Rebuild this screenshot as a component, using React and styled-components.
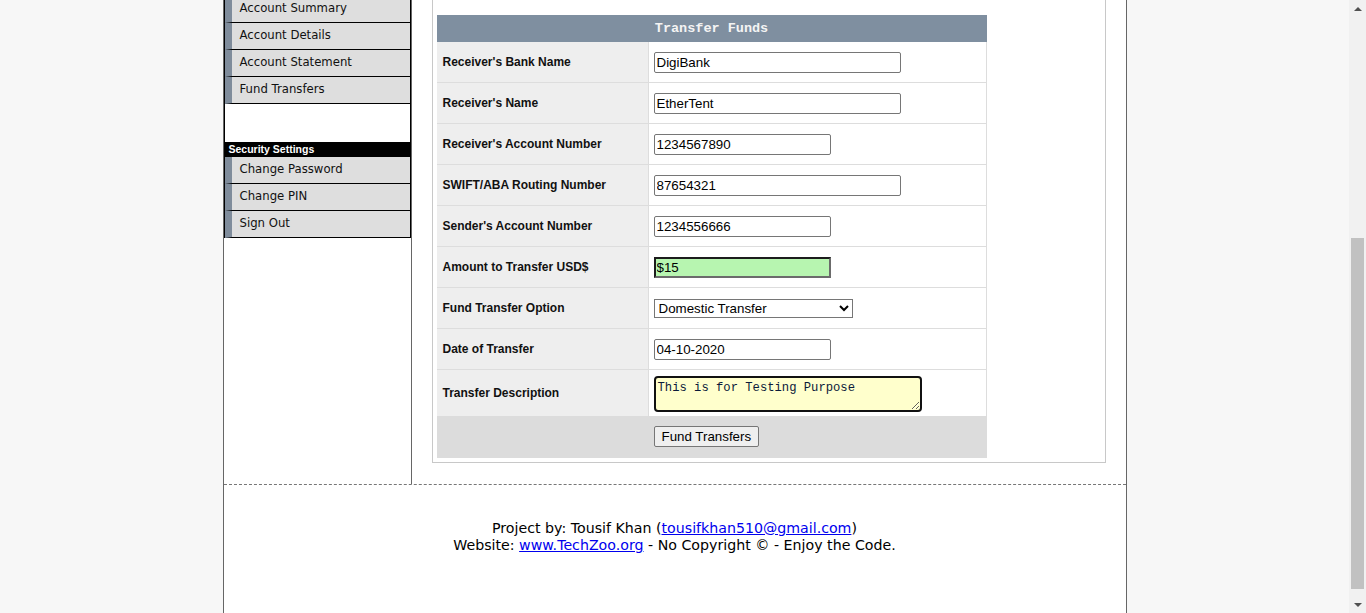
import styled, { createGlobalStyle } from 'styled-components';

const GlobalStyle = createGlobalStyle`
  html, body {
    margin: 0;
    padding: 0;
    height: 100%;
    overflow: hidden;
    background: #f7f7f7;
  }
`;

const Screen = styled.div`
  display: flex;
  height: 613px;
  width: 1366px;
`;

const Viewport = styled.div`
  flex: 1;
  overflow: hidden;
  display: flex;
  justify-content: center;
`;

const Page = styled.div`
  width: 902px;
  margin-top: ${p => -p.$scroll}px;
  background: #fff;
  border-left: 1px solid #666;
  border-right: 1px solid #666;
  display: flex;
  flex-direction: column;
  align-self: flex-start;
`;

const Body = styled.div`
  display: flex;
`;

const Sidebar = styled.div`
  width: 187px;
  border-right: 1px solid #666;
`;

const Menu = styled.div`
  border-left: 1px solid #000;
  border-right: 1px solid #000;
`;

const MenuItem = styled.a`
  display: block;
  height: 26px;
  line-height: 25px;
  border-left: 7px solid #7f8c9b;
  border-bottom: 1px solid #000;
  background: #dedede;
  padding-left: 8px;
  font-family: 'DejaVu Sans', Verdana, sans-serif;
  font-size: 11.7px;
  color: #111;
  text-decoration: none;
`;

const MenuGap = styled.div`
  height: 38px;
  background: #fff;
`;

const MenuHeading = styled.div`
  height: 15px;
  line-height: 15px;
  background: #000;
  color: #fff;
  font-family: 'Liberation Sans', Arial, sans-serif;
  font-weight: bold;
  font-size: 10.5px;
  padding-left: 4px;
`;

const Main = styled.div`
  flex: 1;
  padding: 0 20px 21px;
`;

const Box = styled.div`
  border: 1px solid #c8c8c8;
  padding: 18px 4px 4px;
`;

const Table = styled.table`
  width: 550px;
  border-collapse: separate;
  border-spacing: 0;
  font-family: 'Liberation Sans', Arial, sans-serif;
`;

const HeadCell = styled.th`
  height: 27px;
  padding: 0;
  background: #7f8fa0;
  color: #f4f4f4;
  font-family: 'Liberation Mono', 'Courier New', monospace;
  font-weight: bold;
  font-size: 13.5px;
  text-align: center;
  vertical-align: middle;
`;

const Label = styled.td`
  width: 205px;
  height: ${p => p.$h || 40}px;
  padding: 0 0 0 6px;
  background: ${p => (p.$footer ? '#dcdcdc' : '#eeeeee')};
  border-bottom: ${p => (p.$last ? 'none' : '1px solid #dddddd')};
  border-right: ${p => (p.$footer ? 'none' : '1px solid #dddddd')};
  font-size: 12px;
  font-weight: bold;
  color: #111;
  vertical-align: middle;
`;

const Value = styled.td`
  height: ${p => p.$h || 40}px;
  padding: 0 0 0 5px;
  background: ${p => (p.$footer ? '#dcdcdc' : '#fff')};
  border-bottom: ${p => (p.$last ? 'none' : '1px solid #dddddd')};
  border-right: ${p => (p.$footer ? 'none' : '1px solid #dddddd')};
  vertical-align: middle;
`;

const TextInput = styled.input`
  box-sizing: border-box;
  width: ${p => p.$w}px;
  height: 21px;
  padding: 1px 2px;
  border: 1px solid #767676;
  border-radius: 2px;
  font-family: 'Liberation Sans', Arial, sans-serif;
  font-size: 13.33px;
  color: #000;
  background: #fff;
  display: block;
`;

const AmountInput = styled(TextInput)`
  border-width: 2px;
  border-radius: 0;
  border-color: #1c1c1c #6b6b6b #6b6b6b #1c1c1c;
  background: #b7f5b0;
  padding: 0 1px;
`;

const Select = styled.select`
  box-sizing: border-box;
  width: 199px;
  height: 19px;
  font-family: 'Liberation Sans', Arial, sans-serif;
  font-size: 13.33px;
  color: #000;
  border: 1px solid #767676;
  border-radius: 0;
  background: #fff;
  display: block;
`;

const TextArea = styled.textarea`
  box-sizing: border-box;
  width: 268px;
  height: 36px;
  margin: 1px 0 0;
  padding: 3px 2px 1px;
  border: 2px solid #111;
  border-radius: 4px;
  background: #ffffcc;
  font-family: 'Liberation Mono', 'Courier New', monospace;
  font-size: 12.2px;
  color: #0b1a3a;
  display: block;
`;

const Button = styled.button`
  height: 21px;
  margin-top: -2px;
  padding: 1px 7px;
  border: 1px solid #767676;
  border-radius: 2px;
  background: #efefef;
  font-family: 'Liberation Sans', Arial, sans-serif;
  font-size: 13.33px;
  color: #000;
`;

const Footer = styled.div`
  border-top: 1px dashed #777;
  padding: 35px 0 80px;
  text-align: center;
  font-family: 'DejaVu Sans', Verdana, sans-serif;
  font-size: 14.2px;
  line-height: 17px;
  color: #000;
`;

const FooterLink = styled.a`
  color: #0000ee;
  text-decoration: underline;
`;

const ScrollBar = styled.div`
  width: 17px;
  background: #f1f1f1;
  display: flex;
  flex-direction: column;
  align-items: center;
`;

const Arrow = styled.div`
  height: 17px;
  width: 17px;
  display: flex;
  align-items: center;
  justify-content: center;
  &::after {
    content: '';
    width: 0;
    height: 0;
    border-left: 4px solid transparent;
    border-right: 4px solid transparent;
    ${p =>
      p.$down
        ? 'border-top: 4px solid #505050;'
        : 'border-bottom: 4px solid #505050;'}
  }
`;

const Track = styled.div`
  flex: 1;
  width: 100%;
  display: flex;
  justify-content: center;
`;

const Thumb = styled.div`
  width: 13px;
  margin-top: ${p => p.$top}px;
  height: ${p => p.$size}px;
  background: #c1c1c1;
`;

const rows = [
  { label: "Receiver's Bank Name", value: 'DigiBank', w: 247 },
  { label: "Receiver's Name", value: 'EtherTent', w: 247 },
  { label: "Receiver's Account Number", value: '1234567890', w: 177 },
  { label: 'SWIFT/ABA Routing Number', value: '87654321', w: 247 },
  { label: "Sender's Account Number", value: '1234556666', w: 177 },
];

export default function App() {
  return (
    <>
      <GlobalStyle />
      <Screen>
        <Viewport>
          <Page $scroll={4}>
            <Body>
              <Sidebar>
                <Menu>
                  <MenuItem>Account Summary</MenuItem>
                  <MenuItem>Account Details</MenuItem>
                  <MenuItem>Account Statement</MenuItem>
                  <MenuItem>Fund Transfers</MenuItem>
                  <MenuGap />
                  <MenuHeading>Security Settings</MenuHeading>
                  <MenuItem>Change Password</MenuItem>
                  <MenuItem>Change PIN</MenuItem>
                  <MenuItem>Sign Out</MenuItem>
                </Menu>
              </Sidebar>
              <Main>
                <Box>
                  <Table>
                    <thead>
                      <tr>
                        <HeadCell colSpan={2}>Transfer Funds</HeadCell>
                      </tr>
                    </thead>
                    <tbody>
                      {rows.map(r => (
                        <tr key={r.label}>
                          <Label>{r.label}</Label>
                          <Value>
                            <TextInput $w={r.w} defaultValue={r.value} />
                          </Value>
                        </tr>
                      ))}
                      <tr>
                        <Label>Amount to Transfer USD$</Label>
                        <Value>
                          <AmountInput $w={177} defaultValue="$15" />
                        </Value>
                      </tr>
                      <tr>
                        <Label>Fund Transfer Option</Label>
                        <Value>
                          <Select defaultValue="domestic">
                            <option value="domestic">Domestic Transfer</option>
                            <option value="international">International Transfer</option>
                          </Select>
                        </Value>
                      </tr>
                      <tr>
                        <Label>Date of Transfer</Label>
                        <Value>
                          <TextInput $w={177} defaultValue="04-10-2020" />
                        </Value>
                      </tr>
                      <tr>
                        <Label $h={46} $last>Transfer Description</Label>
                        <Value $h={46} $last>
                          <TextArea defaultValue="This is for Testing Purpose" />
                        </Value>
                      </tr>
                      <tr>
                        <Label $h={42} $footer $last />
                        <Value $h={42} $footer $last>
                          <Button type="button">Fund Transfers</Button>
                        </Value>
                      </tr>
                    </tbody>
                  </Table>
                </Box>
              </Main>
            </Body>
            <Footer>
              Project by: Tousif Khan (
              <FooterLink href="#">tousifkhan510@gmail.com</FooterLink>)
              <br />
              Website: <FooterLink href="#">www.TechZoo.org</FooterLink> - No Copyright © - Enjoy the Code.
            </Footer>
          </Page>
        </Viewport>
        <ScrollBar>
          <Arrow />
          <Track>
            <Thumb $top={221} $size={351} />
          </Track>
          <Arrow $down />
        </ScrollBar>
      </Screen>
    </>
  );
}
